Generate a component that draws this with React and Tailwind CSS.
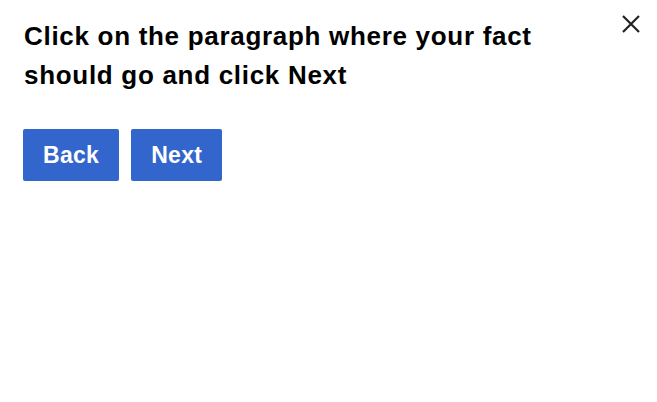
import React from "react";

export default function App() {
  return (
    <div
      className="relative w-[657px] h-[402px] bg-white"
      style={{ fontFamily: '"Liberation Sans", Arial, sans-serif' }}
    >
      <button
        className="absolute left-[621px] top-[14px] w-[20px] h-[20px] flex items-center justify-center"
        aria-label="Close"
      >
        <svg width="20" height="20" viewBox="0 0 20 20">
          <path d="M2 2 L18 18 M18 2 L2 18" stroke="#222" strokeWidth="2.2" fill="none" />
        </svg>
      </button>
      <div className="pl-[24px] pt-[17px]">
        <h1 className="w-[570px] text-[26px] leading-[39px] font-bold text-black tracking-[0.7px]">
          Click on the paragraph where your fact should go and click Next
        </h1>
        <div className="flex gap-[12px] mt-[34px] ml-[-1px]">
          <button className="h-[52px] px-[20px] bg-[#3366cc] text-white text-[23px] font-bold rounded-[2px] tracking-[0.3px]">
            Back
          </button>
          <button className="h-[52px] px-[20px] bg-[#3366cc] text-white text-[23px] font-bold rounded-[2px] tracking-[0.3px]">
            Next
          </button>
        </div>
      </div>
    </div>
  );
}
